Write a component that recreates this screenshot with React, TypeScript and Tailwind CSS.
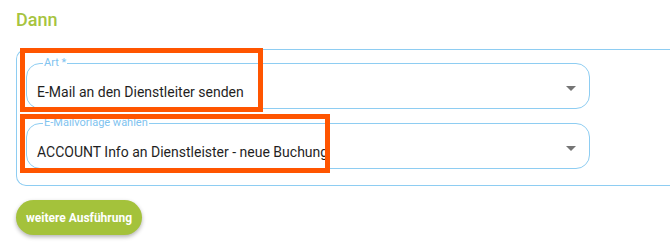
import React from "react";

function Arrow() {
  return (
    <svg width="10" height="5" viewBox="0 0 10 5" className="shrink-0">
      <path d="M0 0 L5 5 L10 0 Z" fill="#757575" />
    </svg>
  );
}

function SelectField({ label, value }: { label: string; value: string }) {
  return (
    <fieldset className="relative h-[52px] w-[564px] rounded-[14px] border border-[#8ecdf2] px-[10px] pb-0 pt-0 min-w-0">
      <legend className="ml-[6px] px-[1px] text-[11px] leading-[12px] text-[#7fc3ef]">
        {label}
      </legend>
      <div className="flex h-[38px] items-center justify-between pr-[3px]">
        <span className="text-[14px] text-[#1f1f1f] leading-[18px] pt-[8px]">{value}</span>
        <Arrow />
      </div>
    </fieldset>
  );
}

export default function App() {
  return (
    <div
      className="relative h-[249px] w-[670px] overflow-hidden bg-white"
      style={{ fontFamily: "Roboto, 'Noto Sans', sans-serif" }}
    >
      <div className="flex flex-col pl-[16px] pt-[8px]">
        <div className="text-[18px] font-medium leading-[24px] text-[#a7c43f]">Dann</div>
        <div className="mt-[17px] flex flex-col gap-[8px] rounded-l-[10px] border border-r-0 border-[#8ecdf2] pb-[16px] pl-[9px] pt-[7px]">
          <SelectField label="Art *" value="E-Mail an den Dienstleiter senden" />
          <SelectField label="E-Mailvorlage wählen" value="ACCOUNT Info an Dienstleister - neue Buchung" />
        </div>
        <div className="mt-[14px]">
          <button className="h-[35px] w-[126px] rounded-full bg-[#a4c23b] text-[12px] font-bold text-white shadow-[0_2px_4px_rgba(0,0,0,0.3)]">
            weitere Ausführung
          </button>
        </div>
      </div>
      <div className="pointer-events-none absolute left-[20px] top-[48px] h-[64px] w-[243px] border-[5px] border-[#ff5500]" />
      <div className="pointer-events-none absolute left-[20px] top-[114px] h-[59px] w-[310px] border-[5px] border-[#ff5500]" />
    </div>
  );
}
